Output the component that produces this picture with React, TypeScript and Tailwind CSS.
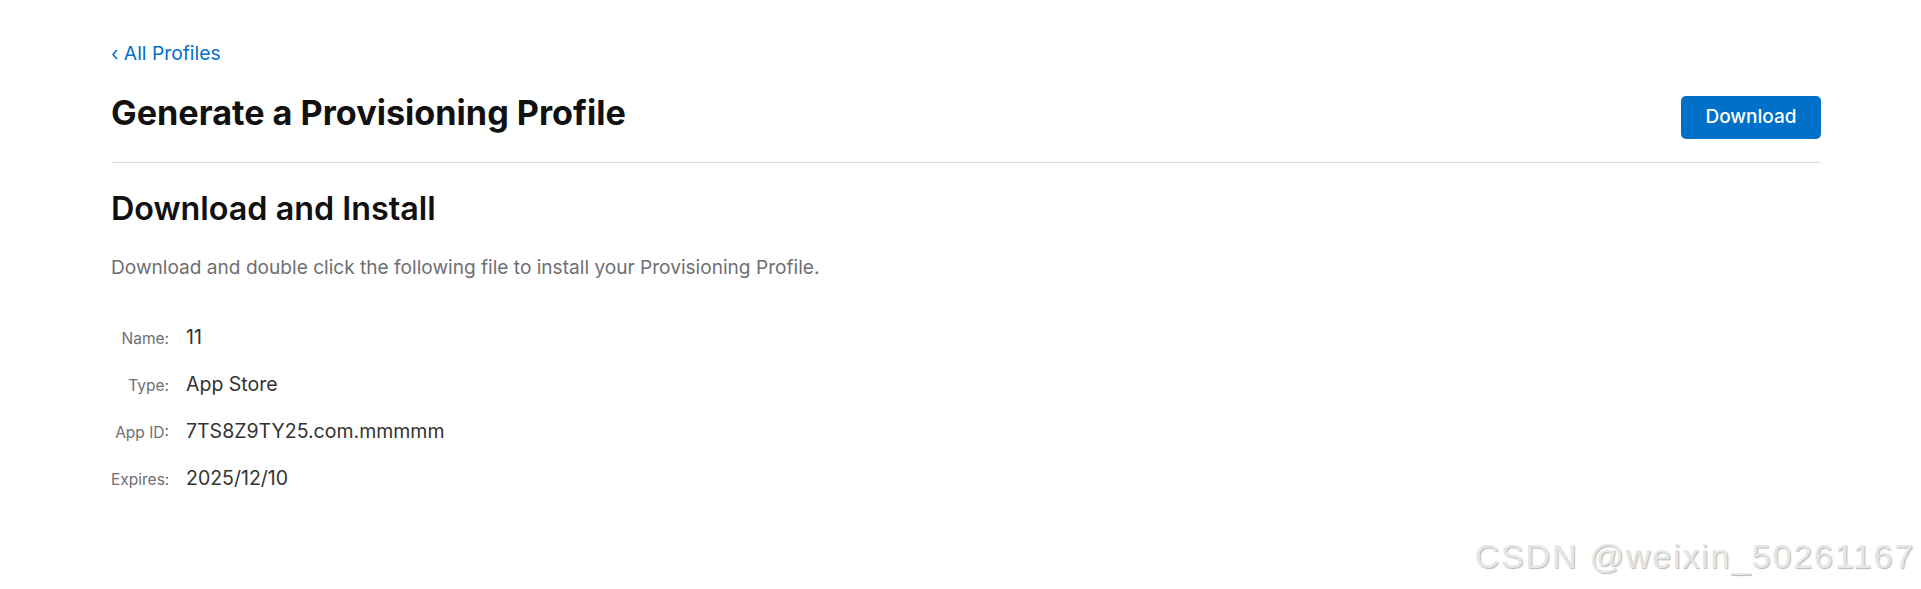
import React from "react";

const rows: [string, string][] = [
  ["Name:", "11"],
  ["Type:", "App Store"],
  ["App ID:", "7TS8Z9TY25.com.mmmmm"],
  ["Expires:", "2025/12/10"],
];

export default function App() {
  return (
    <div className="relative min-h-[589px] w-full overflow-hidden bg-white font-['Inter','Noto_Sans',sans-serif]">
      <div className="pl-[111px] pr-[100px] pt-[43px]">
        <a className="block text-[19.3px] leading-[20px] text-[#0070c9]">
          ‹ All Profiles
        </a>
        <div className="mt-[33px] flex items-start justify-between border-b border-[#dcdcdf] pb-[23px]">
          <h1 className="-mt-[1px] text-[34.2px] font-bold leading-[36px] text-[#111111]">
            Generate a Provisioning Profile
          </h1>
          <button className="h-[43px] w-[140px] rounded-[5px] bg-[#0070c9] text-[19px] font-medium text-white">
            Download
          </button>
        </div>
        <h2 className="mt-[30px] text-[32.3px] font-semibold leading-[32px] text-[#111111]">
          Download and Install
        </h2>
        <p className="mt-[30px] text-[19.1px] leading-[24px] text-[#6e6e73]">
          Download and double click the following file to install your Provisioning Profile.
        </p>
        <div className="mt-[46px] flex flex-col gap-[23px]">
          {rows.map(([k, v]) => (
            <div key={k} className="flex h-[24px] items-baseline gap-[17px] leading-[24px]">
              <span className="w-[58px] shrink-0 text-right text-[15.5px] text-[#6e6e73]">{k}</span>
              <span className="text-[19.5px] text-[#333333]">{v}</span>
            </div>
          ))}
        </div>
      </div>
      <div className="absolute right-[6px] top-[539px] font-['Liberation_Sans',Arial,sans-serif] text-[34px] leading-[34px] tracking-[1.8px] text-[#e6e6e6] [text-shadow:1px_1px_1px_#b8b8b8]">
        CSDN @weixin_50261167
      </div>
    </div>
  );
}
